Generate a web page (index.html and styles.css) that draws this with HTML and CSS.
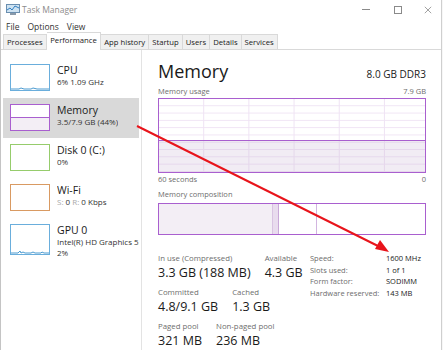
FILE: index.html
```html
<!DOCTYPE html>
<html lang="en">
<head>
  <meta charset="UTF-8" />
  <title>Task Manager</title>
  <link rel="stylesheet" href="styles.css">
</head>
<body>
  <div class="window">
    <div class="titlebar">
      <svg class="app-icon" width="14" height="11" viewBox="0 0 14 11">
        <rect x="0.5" y="0.5" width="13" height="8" fill="#cfe3f2" stroke="#6a8fb0"/>
        <polyline points="1,6 4,4 6,6 9,2 13,4" fill="none" stroke="#2f7dc0" stroke-width="1"/>
        <rect x="4" y="9" width="6" height="2" fill="#8a9aaa"/>
      </svg>
      <span class="title">Task Manager</span>
      <div class="controls">
        <span class="ctl min"></span>
        <span class="ctl max"></span>
        <svg class="ctl close" width="10" height="10" viewBox="0 0 10 10">
          <path d="M1 1 L9 9 M9 1 L1 9" stroke="#8a8a8a" stroke-width="1"/>
        </svg>
      </div>
    </div>

    <div class="menubar">
      <span>File</span>
      <span>Options</span>
      <span>View</span>
    </div>

    <div class="tabs">
      <div class="tab">Processes</div>
      <div class="tab active">Performance</div>
      <div class="tab">App history</div>
      <div class="tab">Startup</div>
      <div class="tab">Users</div>
      <div class="tab">Details</div>
      <div class="tab">Services</div>
    </div>

    <div class="main">
      <div class="sidebar">
        <div class="item">
          <div class="thumb cpu">
            <svg width="38" height="25" viewBox="0 0 38 25">
              <polyline points="0,24 8,24 10,23 13,24 20,24 22,23 26,24 38,24" fill="none" stroke="#4a9ad0" stroke-width="1"/>
            </svg>
          </div>
          <div class="info">
            <div class="name">CPU</div>
            <div class="sub">6% 1.09 GHz</div>
          </div>
        </div>
        <div class="item selected">
          <div class="thumb mem"><div class="mem-fill"></div></div>
          <div class="info">
            <div class="name">Memory</div>
            <div class="sub">3.5/7.9 GB (44%)</div>
          </div>
        </div>
        <div class="item">
          <div class="thumb disk"></div>
          <div class="info">
            <div class="name">Disk 0 (C:)</div>
            <div class="sub">0%</div>
          </div>
        </div>
        <div class="item">
          <div class="thumb wifi"></div>
          <div class="info">
            <div class="name">Wi-Fi</div>
            <div class="sub"><span class="dim">S:</span> 0 <span class="dim">R:</span> 0 Kbps</div>
          </div>
        </div>
        <div class="item">
          <div class="thumb gpu">
            <svg width="38" height="29" viewBox="0 0 38 29">
              <polyline points="0,28 7,28 9,26 10,28 12,27 14,28 20,28 22,27 24,28 30,28 31,27 33,28 38,28" fill="none" stroke="#4a9ad0" stroke-width="1"/>
            </svg>
          </div>
          <div class="info">
            <div class="name">GPU 0</div>
            <div class="sub">Intel(R) HD Graphics 520</div>
            <div class="sub">2%</div>
          </div>
        </div>
      </div>

      <div class="panel">
        <div class="panel-head">
          <h1>Memory</h1>
          <span class="spec">8.0 GB DDR3</span>
        </div>

        <div class="axis-row">
          <span>Memory usage</span>
          <span>7.9 GB</span>
        </div>
        <div class="usage-graph">
          <div class="usage-fill"></div>
        </div>
        <div class="axis-row">
          <span>60 seconds</span>
          <span>0</span>
        </div>

        <div class="axis-row comp-label">
          <span>Memory composition</span>
        </div>
        <div class="composition">
          <div class="seg in-use"></div>
          <div class="seg modified"></div>
          <div class="seg standby"></div>
          <div class="seg free"></div>
        </div>

        <div class="stats">
          <div class="stats-left">
            <div class="stat-row">
              <div class="stat">
                <div class="label">In use (Compressed)</div>
                <div class="value">3.3 GB (188 MB)</div>
              </div>
              <div class="stat">
                <div class="label">Available</div>
                <div class="value">4.3 GB</div>
              </div>
            </div>
            <div class="stat-row">
              <div class="stat">
                <div class="label">Committed</div>
                <div class="value">4.8/9.1 GB</div>
              </div>
              <div class="stat">
                <div class="label">Cached</div>
                <div class="value">1.3 GB</div>
              </div>
            </div>
            <div class="stat-row">
              <div class="stat">
                <div class="label">Paged pool</div>
                <div class="value">321 MB</div>
              </div>
              <div class="stat">
                <div class="label">Non-paged pool</div>
                <div class="value">236 MB</div>
              </div>
            </div>
          </div>
          <div class="stats-right">
            <span class="label">Speed:</span><span>1600 MHz</span>
            <span class="label">Slots used:</span><span>1 of 1</span>
            <span class="label">Form factor:</span><span>SODIMM</span>
            <span class="label">Hardware reserved:</span><span>143 MB</span>
          </div>
        </div>
      </div>
    </div>

    <!-- annotation arrow drawn over the screenshot -->
    <svg class="arrow" width="443" height="350" viewBox="0 0 443 350">
      <line x1="137" y1="126" x2="380" y2="247" stroke="#e8141b" stroke-width="2"/>
      <polygon points="389,252 375,249 380,240" fill="#e8141b"/>
    </svg>
  </div>
</body>
</html>
```

FILE: styles.css
```css
:root {
  --mem-color: #a95fcf;
  --mem-grid: #efe3f4;
  --mem-fill: #f3eef5;
  --label-color: #6d6d6d;
}

* {
  box-sizing: border-box;
}

body {
  margin: 0;
  width: 443px;
  height: 350px;
  overflow: hidden;
  background: #f7f7f7;
  font-family: 'Open Sans', 'Noto Sans', sans-serif;
  color: #1a1a1a;
}

.window {
  position: relative;
  width: 442px;
  height: 350px;
  overflow: hidden;
  background: #fff;
  border-right: 1px solid #cfcfcf;
  border-left: 1px solid #c4c4c4;
}

/* title bar */
.titlebar {
  display: flex;
  align-items: center;
  height: 19px;
  padding-left: 5px;
}

.app-icon {
  margin-right: 2px;
}

.title {
  font-size: 8.5px;
  color: #8c8c8c;
}

.controls {
  margin-left: auto;
  display: flex;
  align-items: center;
  gap: 22px;
  padding-right: 9px;
}

.ctl.min {
  width: 8px;
  border-top: 1px solid #8a8a8a;
  margin-right: 2px;
}

.ctl.max {
  width: 8px;
  height: 8px;
  border: 1px solid #8a8a8a;
}

.ctl.close {
  width: 8px;
  height: 8px;
}

/* menu */
.menubar {
  display: flex;
  gap: 8px;
  height: 14px;
  align-items: center;
  padding-left: 5px;
  font-size: 8.5px;
  color: #333;
}

/* tabs */
.tabs {
  display: flex;
  align-items: flex-end;
  height: 17px;
  padding-left: 2px;
  border-bottom: 1px solid #d9d9d9;
  white-space: nowrap;
}

.tab {
  height: 15px;
  padding: 0 3px;
  font-size: 7.7px;
  line-height: 14px;
  background: #f0f0f0;
  border: 1px solid #d9d9d9;
  border-bottom: none;
  border-left: none;
  color: #1a1a1a;
}

.tab:first-child {
  border-left: 1px solid #d9d9d9;
}

.tab.active {
  background: #fff;
  margin-bottom: -1px;
  height: 18px;
  line-height: 15px;
  padding: 0 3.5px;
}

/* body */
.main {
  display: flex;
  height: 300px;
}

.sidebar {
  width: 141px;
  border-right: 1px solid #e3e3e3;
  padding: 8px 0 0 2px;
  overflow: hidden;
}

.item {
  display: flex;
  height: 40px;
  padding: 6px 0 0 7px;
  gap: 7px;
  width: 136px;
  white-space: nowrap;
}

.item.selected {
  background: #d9d9d9;
}

.thumb {
  flex: none;
  width: 40px;
  height: 27px;
  border: 1px solid;
  background: #fff;
  overflow: hidden;
}

.thumb svg {
  display: block;
}

.thumb.cpu { border-color: #6aaedc; }
.thumb.disk { border-color: #96cc6c; }
.thumb.wifi { border-color: #d99a62; }
.thumb.gpu { border-color: #6aaedc; height: 31px; }

.thumb.mem {
  border-color: var(--mem-color);
  display: flex;
  flex-direction: column;
  justify-content: flex-end;
}

.mem-fill {
  height: 13px;
  border-top: 1px solid var(--mem-color);
  background: var(--mem-fill);
}

.info {
  min-width: 0;
  overflow: hidden;
}

.name {
  font-size: 10.5px;
  line-height: 12px;
}

.sub {
  font-size: 8px;
  line-height: 11px;
  color: #333;
}

.sub .dim {
  color: #aaa;
}

/* right panel */
.panel {
  flex: 1;
  min-width: 0;
  padding: 9px 15px 0 16px;
}

.panel-head {
  display: flex;
  justify-content: space-between;
  align-items: baseline;
  height: 27px;
}

h1 {
  margin: 0;
  font-size: 18px;
  font-weight: 400;
  line-height: 24px;
}

.spec {
  font-size: 10px;
}

.axis-row {
  display: flex;
  justify-content: space-between;
  font-size: 7.5px;
  line-height: 10px;
  color: var(--label-color);
}

.usage-graph {
  position: relative;
  height: 75px;
  border: 1px solid var(--mem-color);
  margin: 2px 0 1px;
  background-color: #fff;
  background-image:
    linear-gradient(to right, var(--mem-grid) 1px, transparent 1px),
    linear-gradient(to bottom, var(--mem-grid) 1px, transparent 1px);
  background-size: 45.2px 100%, 100% 7.3px;
  background-position: -1px 0, 0 -1px;
}

.usage-fill {
  position: absolute;
  left: 0;
  right: 0;
  bottom: 0;
  height: 32px;
  border-top: 1px solid var(--mem-color);
  background: rgba(200, 180, 210, 0.25);
}

.comp-label {
  margin-top: 5px;
}

.composition {
  display: flex;
  height: 32px;
  margin-top: 4px;
  border: 1px solid var(--mem-color);
}

.seg.in-use {
  width: 113px;
  background: var(--mem-fill);
}

.seg.modified {
  width: 7px;
  background: #e9dcee;
  border-left: 1px solid #d8c3e1;
  border-right: 1px solid #c9a8d8;
}

.seg.standby {
  width: 38px;
  border-right: 1px solid #d2b5e0;
}

.seg.free {
  flex: 1;
}

.stats {
  display: flex;
  margin-top: 18px;
  white-space: nowrap;
}

.stats-left {
  width: 152px;
  flex: none;
}

.stat-row {
  display: flex;
  gap: 14px;
  margin-bottom: 5px;
}

.stat .label {
  font-size: 7.8px;
  line-height: 10px;
  color: var(--label-color);
}

.stat .value {
  font-size: 12.5px;
  line-height: 19px;
}

.stats-right {
  display: grid;
  grid-template-columns: 76px auto;
  align-content: start;
  font-size: 7.5px;
  line-height: 11.7px;
}

.stats-right .label {
  color: var(--label-color);
}

/* annotation */
.arrow {
  position: absolute;
  left: -1px;
  top: 0;
  pointer-events: none;
}
```
